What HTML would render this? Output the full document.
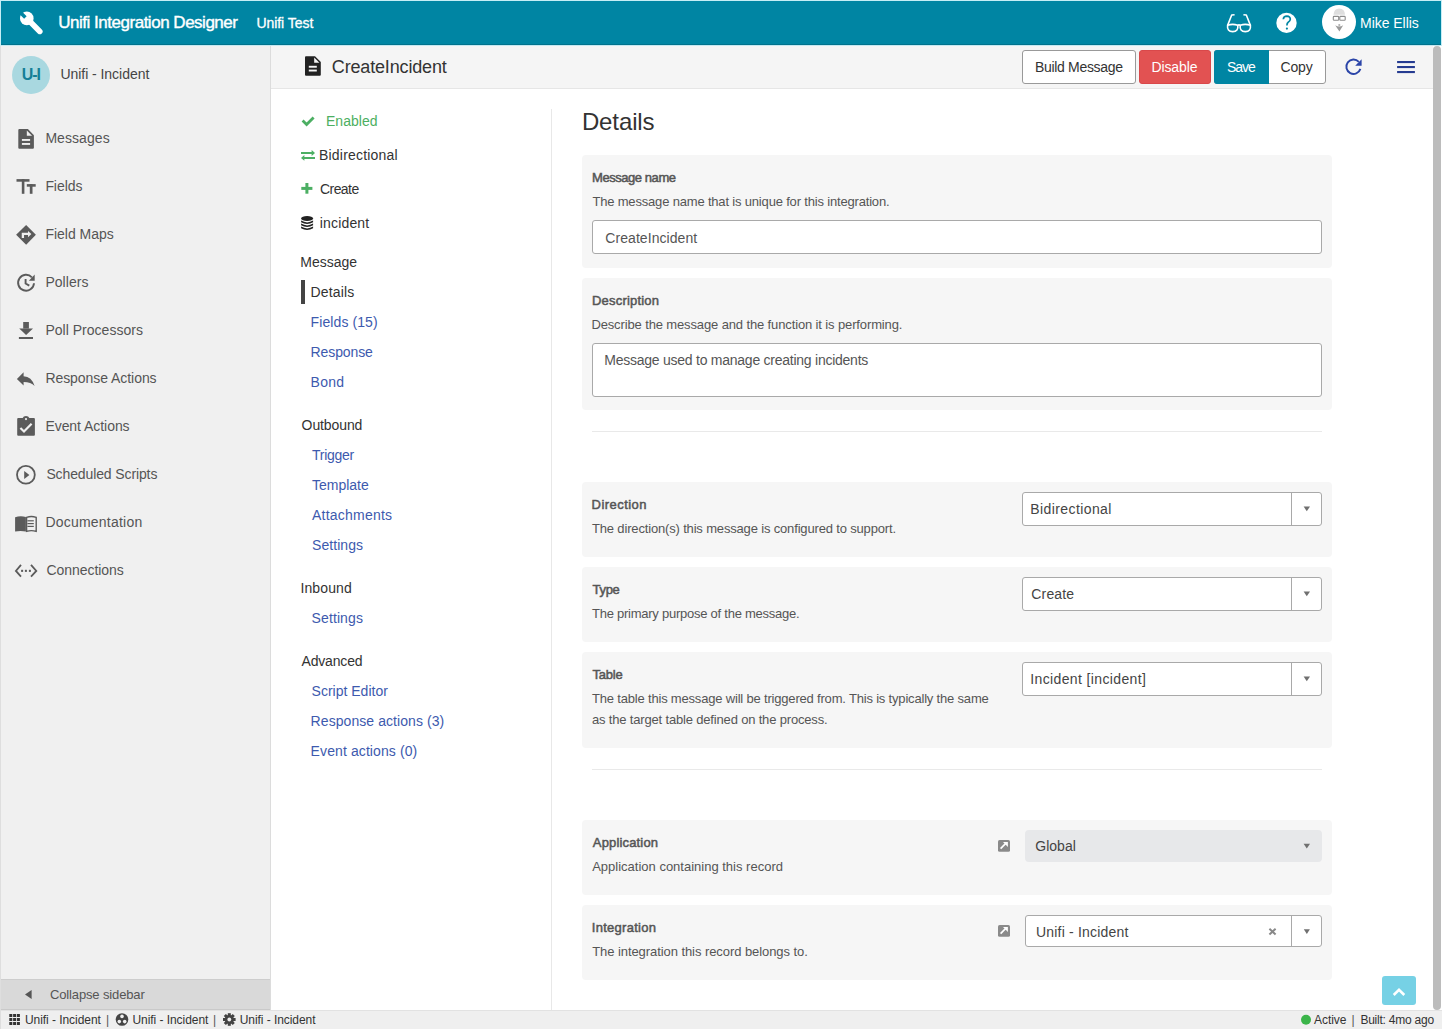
<!DOCTYPE html>
<html><head><meta charset="utf-8">
<style>
*{box-sizing:border-box;margin:0;padding:0}
html,body{width:1442px;height:1029px;overflow:hidden;background:#dedede;font-family:"Liberation Sans",sans-serif}
.a{position:absolute}
.t{position:absolute;white-space:pre;line-height:0;font-family:"Liberation Sans",sans-serif}
svg{position:absolute;overflow:visible}
</style></head><body>
<!-- main frame -->
<div class="a" style="left:1px;top:1px;width:1441px;height:1028px;background:#fff"></div>
<!-- header -->
<div class="a" style="left:0;top:0;width:1442px;height:46px;background:#c6eef6"></div>
<div class="a" style="left:1px;top:1px;width:1440px;height:44px;background:#0085a3;border-bottom:1px solid #00728c"></div>
<!-- sidebar -->
<div class="a" style="left:1px;top:45px;width:269px;height:934px;background:#f0f0f0"></div>
<div class="a" style="left:270px;top:45px;width:1px;height:965px;background:#dcdcdc"></div>
<!-- collapse band -->
<div class="a" style="left:1px;top:979px;width:269px;height:31px;background:#d9d9d9;border-top:1px solid #cdcdcd;border-bottom:1px solid #c9c9c9"></div>
<!-- status bar -->
<div class="a" style="left:1px;top:1010px;width:1441px;height:19px;background:#efefef;border-top:1px solid #e2e2e2"></div>
<!-- toolbar -->
<div class="a" style="left:271px;top:45px;width:1162px;height:44px;background:#f5f5f5;border-bottom:1px solid #e6e6e6"></div>
<div class="a" style="left:1px;top:45px;width:1440px;height:1px;background:#c4e8f1"></div>
<!-- scrollbar -->
<div class="a" style="left:1433px;top:46px;width:8px;height:964px;background:#bcbcbc;border-radius:4px"></div>
<!-- mid divider -->
<div class="a" style="left:551px;top:109px;width:1px;height:901px;background:#e8e8e8"></div>

<!-- cards -->
<div class="a" style="left:582px;top:155px;width:750px;height:113px;background:#f6f6f6;border-radius:4px"></div>
<div class="a" style="left:592px;top:220px;width:730px;height:34px;background:#fff;border:1px solid #a9a9a9;border-radius:3px"></div>
<div class="a" style="left:582px;top:278px;width:750px;height:132px;background:#f6f6f6;border-radius:4px"></div>
<div class="a" style="left:592px;top:343px;width:730px;height:54px;background:#fff;border:1px solid #a9a9a9;border-radius:3px"></div>
<div class="a" style="left:592px;top:431px;width:730px;height:1px;background:#e9e9e9"></div>

<div class="a" style="left:582px;top:482px;width:750px;height:75px;background:#f6f6f6;border-radius:4px"></div>
<div class="a" style="left:582px;top:567px;width:750px;height:75px;background:#f6f6f6;border-radius:4px"></div>
<div class="a" style="left:582px;top:652px;width:750px;height:96px;background:#f6f6f6;border-radius:4px"></div>
<div class="a" style="left:592px;top:769px;width:730px;height:1px;background:#e9e9e9"></div>
<div class="a" style="left:582px;top:820px;width:750px;height:75px;background:#f6f6f6;border-radius:4px"></div>
<div class="a" style="left:582px;top:905px;width:750px;height:75px;background:#f6f6f6;border-radius:4px"></div>

<!-- selects -->
<div class="a" style="left:1022px;top:492px;width:300px;height:34px;background:#fff;border:1px solid #a9a9a9;border-radius:3px"></div>
<div class="a" style="left:1291px;top:493px;width:1px;height:32px;background:#a9a9a9"></div>
<div class="a" style="left:1022px;top:577px;width:300px;height:34px;background:#fff;border:1px solid #a9a9a9;border-radius:3px"></div>
<div class="a" style="left:1291px;top:578px;width:1px;height:32px;background:#a9a9a9"></div>
<div class="a" style="left:1022px;top:662px;width:300px;height:34px;background:#fff;border:1px solid #a9a9a9;border-radius:3px"></div>
<div class="a" style="left:1291px;top:663px;width:1px;height:32px;background:#a9a9a9"></div>
<div class="a" style="left:1025px;top:830px;width:297px;height:32px;background:#e7e8ea;border-radius:4px"></div>
<div class="a" style="left:1025px;top:915px;width:297px;height:32px;background:#fff;border:1px solid #a9a9a9;border-radius:3px"></div>
<div class="a" style="left:1291px;top:916px;width:1px;height:30px;background:#a9a9a9"></div>

<!-- toolbar buttons -->
<div class="a" style="left:1022px;top:50px;width:114px;height:34px;background:#fff;border:1px solid #999;border-radius:3px"></div>
<div class="a" style="left:1139px;top:50px;width:72px;height:34px;background:#e25252;border:1px solid #d9484a;border-radius:3px"></div>
<div class="a" style="left:1214px;top:50px;width:112px;height:34px;background:#fff;border:1px solid #999;border-radius:3px"></div>
<div class="a" style="left:1214px;top:50px;width:55px;height:34px;background:#0085a3;border-radius:3px 0 0 3px"></div>

<!-- mid nav active bar -->
<div class="a" style="left:301px;top:280px;width:4px;height:24px;background:#444"></div>

<!-- sidebar avatar -->
<div class="a" style="left:12px;top:56px;width:38px;height:38px;border-radius:50%;background:#a9d8e0"></div>
<!-- header avatar -->
<div class="a" style="left:1322px;top:5px;width:34px;height:34px;border-radius:50%;background:#fff"></div>
<!-- scroll top button -->
<div class="a" style="left:1382px;top:976px;width:34px;height:29px;border-radius:3px;background:#76d1e5"></div>

<svg width="1442" height="1029" viewBox="0 0 1442 1029" style="left:0;top:0">
<!-- header wrench -->
<g fill="#fff">
  <circle cx="26.8" cy="18.4" r="6.8"/>
  <line x1="27" y1="18.6" x2="39.8" y2="31.4" stroke="#fff" stroke-width="5.6" stroke-linecap="round"/>
</g>
<polygon points="26.6,16.2 21.6,11.2 19.1,13.7 24.1,18.7" fill="#0085a3"/>
<!-- glasses -->
<g fill="none" stroke="#fff" stroke-width="1.6" stroke-linejoin="round">
  <path d="M1227.6 25.2 Q1232.7 23.6 1237.8 25.2 Q1238.6 31.6 1232.7 31.6 Q1226.8 31.6 1227.6 25.2 Z"/>
  <path d="M1240.2 25.2 Q1245.3 23.6 1250.4 25.2 Q1251.2 31.6 1245.3 31.6 Q1239.4 31.6 1240.2 25.2 Z"/>
  <path d="M1237.8 25.2 Q1239 24.6 1240.2 25.2"/>
  <path d="M1227.6 25.4 L1231.7 15 L1234.6 14.7"/>
  <path d="M1250.4 25.4 L1246.3 15 L1243.4 14.7"/>
</g>
<!-- help -->
<circle cx="1286.5" cy="22.9" r="10.2" fill="#fff"/>
<path d="M1283.3 19.2 Q1283.5 16.2 1286.9 16.2 Q1290.4 16.3 1290.3 19.3 Q1290.2 21.2 1288.2 22.3 Q1286.9 23.1 1286.9 25.6" fill="none" stroke="#0085a3" stroke-width="1.7"/>
<circle cx="1286.9" cy="28.6" r="1.1" fill="#0085a3"/>
<!-- header avatar face -->
<path d="M1333.5 14.8 Q1334 8.6 1339.2 8.6 Q1344.6 8.6 1345 14.8 Z" fill="#dedede"/>
<rect x="1333.3" y="16.4" width="5.4" height="3.8" rx="0.8" fill="none" stroke="#8c8c8c" stroke-width="1.1"/>
<rect x="1339.8" y="16.4" width="5.4" height="3.8" rx="0.8" fill="none" stroke="#8c8c8c" stroke-width="1.1"/>
<path d="M1335.2 25.2 Q1339.2 28 1343.2 25.2 L1339.4 31.5 Z" fill="#9a9a9a"/>
<rect x="1338.4" y="24" width="1.8" height="2.2" fill="#b5b5b5"/>

<!-- sidebar avatar initials drawn as text later -->
<!-- sidebar icons -->
<g fill="#5b5b5b">
  <!-- messages file -->
  <path d="M19.3 129.1 H27.9 L33.9 135.2 V147.7 Q33.9 148.7 32.9 148.7 H19.3 Q18.3 148.7 18.3 147.7 V130.1 Q18.3 129.1 19.3 129.1 Z"/>
</g>
<polygon points="26.8,130.6 26.8,135.8 32.1,135.8" fill="#f0f0f0"/>
<rect x="21.9" y="139" width="8.2" height="1.9" fill="#f0f0f0"/>
<rect x="21.9" y="143" width="8.2" height="1.9" fill="#f0f0f0"/>
<g fill="#5b5b5b">
  <!-- fields Tt -->
  <rect x="16.5" y="179.1" width="13" height="2.6"/>
  <rect x="21.8" y="179.1" width="2.6" height="14.7"/>
  <rect x="26.8" y="184.1" width="8.9" height="2.6"/>
  <rect x="29.8" y="184.1" width="2.7" height="9.7"/>
  <!-- field maps diamond -->
  <polygon points="26.15,224.9 35.9,234.8 26.15,244.8 16.1,234.8"/>
</g>
<path d="M22.9 238.1 V233.9 H28.4" fill="none" stroke="#f0f0f0" stroke-width="2.3"/>
<polygon points="28,230.9 31.4,234 28,237.3" fill="#f0f0f0"/>
<g fill="none" stroke="#5b5b5b" stroke-width="1.9">
  <!-- pollers -->
  <path d="M34.0 283.2 A7.95 7.95 0 1 1 31.9 277.3"/>
  <path d="M25.6 279 V283.5 L29.3 285.6"/>
</g>
<polygon points="34.7,274.4 34.7,280.8 28.9,280.8" fill="#5b5b5b"/>
<g fill="#5b5b5b">
  <!-- download -->
  <rect x="23.2" y="322" width="5.7" height="6.6"/>
  <polygon points="19.2,328.4 33,328.4 26.1,334.9"/>
  <rect x="18.9" y="337" width="14.1" height="2"/>
  <!-- reply -->
  <path d="M16.9 378.9 L23.6 372.2 V376.2 Q31.6 376.4 34.6 386 Q31 382 23.6 382 V385.4 Z"/>
  <!-- clipboard -->
  <path d="M18.2 418.1 H22.7 Q23.4 416.1 26 416.1 Q28.6 416.1 29.3 418.1 H33.9 Q34.9 418.1 34.9 419.1 V434.7 Q34.9 435.7 33.9 435.7 H18.2 Q17.2 435.7 17.2 434.7 V419.1 Q17.2 418.1 18.2 418.1 Z"/>
</g>
<circle cx="26" cy="419.1" r="1.1" fill="#f0f0f0"/>
<path d="M20.4 428 L24 431.5 L31.6 423.7" fill="none" stroke="#f0f0f0" stroke-width="2.2"/>
<!-- play circle -->
<circle cx="25.9" cy="474.8" r="8.9" fill="none" stroke="#5b5b5b" stroke-width="1.8"/>
<polygon points="24.2,470.9 24.2,479 29.4,474.9" fill="#5b5b5b"/>
<!-- book -->
<path d="M15.1 517.3 Q20.5 515.5 25.9 517.1 V531.6 Q20.5 530.2 15.1 531.6 Z" fill="#5b5b5b"/>
<path d="M26.6 517.3 Q31.4 515.7 36.2 517.3 V531.3 Q31.4 529.9 26.6 531.3 Z" fill="none" stroke="#5b5b5b" stroke-width="1.4"/>
<g stroke="#5b5b5b" stroke-width="1.2">
  <line x1="27.4" y1="520.8" x2="33.8" y2="520.8"/>
  <line x1="27.4" y1="523.6" x2="33.8" y2="523.6"/>
  <line x1="27.4" y1="526.4" x2="33.8" y2="526.4"/>
</g>
<!-- connections -->
<g fill="none" stroke="#5b5b5b" stroke-width="1.8">
  <path d="M21 564.9 L15.9 570.9 L21 576.6"/>
  <path d="M31 564.9 L36.3 570.9 L31 576.6"/>
</g>
<g fill="#5b5b5b">
  <rect x="21.1" y="569.8" width="2" height="2.1"/>
  <rect x="24.9" y="569.8" width="2" height="2.1"/>
  <rect x="28.9" y="569.8" width="2" height="2.1"/>
</g>
<!-- collapse caret -->
<polygon points="31.6,990 31.6,999 25,994.5" fill="#555"/>

<!-- toolbar file icon -->
<path d="M306 56.3 H315 L320.8 62.1 V74.7 Q320.8 75.7 319.8 75.7 H306 Q305 75.7 305 74.7 V57.3 Q305 56.3 306 56.3 Z" fill="#222"/>
<polygon points="314.2,57.6 314.2,62.8 319.4,62.8" fill="#f5f5f5"/>
<rect x="308.8" y="65.8" width="8" height="1.9" fill="#f5f5f5"/>
<rect x="308.8" y="69.6" width="8" height="1.9" fill="#f5f5f5"/>
<!-- refresh -->
<path d="M1360.4 68.9 A7.2 7.2 0 1 1 1358.8 61.8" fill="none" stroke="#2b45a8" stroke-width="1.9"/>
<polygon points="1361.6,59.3 1361.6,65.7 1355.2,65.7" fill="#2b45a8"/>
<!-- hamburger -->
<g fill="#263c91">
  <rect x="1397.1" y="61" width="17.8" height="2.1"/>
  <rect x="1397.1" y="66" width="17.8" height="2.1"/>
  <rect x="1397.1" y="71" width="17.8" height="2.1"/>
</g>

<!-- mid nav icons -->
<path d="M302.6 120.6 L306.6 124.5 L313.6 117.4" fill="none" stroke="#4caf63" stroke-width="2.8"/>
<g fill="#4caf63">
  <rect x="301" y="152" width="11" height="2"/>
  <polygon points="311.6,150 315,153 311.6,156"/>
  <rect x="304" y="157" width="11" height="2"/>
  <polygon points="304.4,155.1 301,158 304.4,160.8"/>
  <rect x="301.3" y="186.9" width="11.1" height="3"/>
  <rect x="305.4" y="183" width="3" height="10.7"/>
</g>
<g fill="#222">
  <ellipse cx="307.1" cy="218.4" rx="6" ry="2.5"/>
  <path d="M301.1 220.6 Q307.1 224.2 313.1 220.6 V222.2 Q307.1 225.8 301.1 222.2 Z"/>
  <path d="M301.1 223.6 Q307.1 227.2 313.1 223.6 V225.2 Q307.1 228.8 301.1 225.2 Z"/>
  <path d="M301.1 226.6 Q307.1 230.2 313.1 226.6 V228.2 Q307.1 231.8 301.1 228.2 Z"/>
</g>

<!-- select carets -->
<g fill="#707070">
  <polygon points="1303.6,506.5 1310,506.5 1306.8,511.3"/>
  <polygon points="1303.6,591.5 1310,591.5 1306.8,596.3"/>
  <polygon points="1303.6,676.5 1310,676.5 1306.8,681.3"/>
  <polygon points="1303.6,843.8 1310,843.8 1306.8,848.6"/>
  <polygon points="1303.8,929.3 1309.9,929.3 1306.85,934.1"/>
</g>
<!-- clear x -->
<g stroke="#888" stroke-width="2">
  <line x1="1269.4" y1="928.8" x2="1275.6" y2="934.4"/>
  <line x1="1275.6" y1="928.8" x2="1269.4" y2="934.4"/>
</g>
<!-- external link icons -->
<rect x="998" y="840" width="12" height="11.8" rx="1.6" fill="#8a8a8a"/>
<rect x="998" y="925" width="12" height="11.8" rx="1.6" fill="#8a8a8a"/>
<g stroke="#fff" stroke-width="1.7" fill="none"><line x1="1000.6" y1="848.6" x2="1006" y2="843.2"/><line x1="1000.6" y1="933.6" x2="1006" y2="928.2"/></g>
<g fill="#fff"><polygon points="1003,842 1007.9,842 1007.9,846.9"/><polygon points="1003,927 1007.9,927 1007.9,931.9"/></g>

<!-- scroll top chevron -->
<path d="M1393.7 995 L1399 989.8 L1404.3 995" fill="none" stroke="#fff" stroke-width="2.6"/>

<!-- status bar icons -->
<g fill="#333">
  <rect x="9.3" y="1014" width="3" height="3"/><rect x="13.1" y="1014" width="3" height="3"/><rect x="16.9" y="1014" width="3" height="3"/>
  <rect x="9.3" y="1018" width="3" height="3"/><rect x="13.1" y="1018" width="3" height="3"/><rect x="16.9" y="1018" width="3" height="3"/>
  <rect x="9.3" y="1022" width="3" height="3"/><rect x="13.1" y="1022" width="3" height="3"/><rect x="16.9" y="1022" width="3" height="3"/>
</g>
<circle cx="122" cy="1019.5" r="6.3" fill="#444"/>
<g fill="#efefef"><circle cx="122" cy="1016.4" r="1.8"/><circle cx="119.3" cy="1021.6" r="1.8"/><circle cx="124.7" cy="1021.6" r="1.8"/></g>
<g transform="translate(229.3 1019.5)">
  <circle r="4.6" fill="#444"/>
  <g fill="#444">
    <rect x="-1.5" y="-6.3" width="3" height="12.6"/>
    <rect x="-1.5" y="-6.3" width="3" height="12.6" transform="rotate(45)"/>
    <rect x="-1.5" y="-6.3" width="3" height="12.6" transform="rotate(90)"/>
    <rect x="-1.5" y="-6.3" width="3" height="12.6" transform="rotate(135)"/>
  </g>
  <circle r="1.9" fill="#efefef"/>
</g>
<!-- active dot -->
<circle cx="1306" cy="1019.8" r="5" fill="#3bb54a"/>
</svg>


<div class="t" style="left:58.30px;top:22.96px;font-size:17px;color:#fff;letter-spacing:-0.486px;-webkit-text-stroke:0.4px #fff;">Unifi Integration Designer</div>
<div class="t" style="left:256.40px;top:23.00px;font-size:14px;color:#fff;letter-spacing:-0.043px;-webkit-text-stroke:0.3px #fff;">Unifi Test</div>
<div class="t" style="left:1360.00px;top:23.00px;font-size:14px;color:#fff;letter-spacing:-0.035px;">Mike Ellis</div>
<div class="t" style="left:21.80px;top:75.01px;font-size:16px;color:#157f97;font-weight:bold;letter-spacing:-1.141px;">U-I</div>
<div class="t" style="left:60.40px;top:74.00px;font-size:14px;color:#444;letter-spacing:-0.040px;">Unifi - Incident</div>
<div class="t" style="left:45.40px;top:138.00px;font-size:14px;color:#555;letter-spacing:0.070px;">Messages</div>
<div class="t" style="left:45.40px;top:186.00px;font-size:14px;color:#555;letter-spacing:-0.069px;">Fields</div>
<div class="t" style="left:45.40px;top:234.00px;font-size:14px;color:#555;letter-spacing:-0.008px;">Field Maps</div>
<div class="t" style="left:45.40px;top:282.00px;font-size:14px;color:#555;letter-spacing:0.035px;">Pollers</div>
<div class="t" style="left:45.40px;top:330.00px;font-size:14px;color:#555;letter-spacing:0.018px;">Poll Processors</div>
<div class="t" style="left:45.40px;top:378.00px;font-size:14px;color:#555;letter-spacing:-0.056px;">Response Actions</div>
<div class="t" style="left:45.40px;top:426.00px;font-size:14px;color:#555;letter-spacing:-0.050px;">Event Actions</div>
<div class="t" style="left:46.40px;top:474.00px;font-size:14px;color:#555;letter-spacing:-0.115px;">Scheduled Scripts</div>
<div class="t" style="left:45.40px;top:522.00px;font-size:14px;color:#555;letter-spacing:0.218px;">Documentation</div>
<div class="t" style="left:46.40px;top:570.00px;font-size:14px;color:#555;letter-spacing:-0.043px;">Connections</div>
<div class="t" style="left:50.00px;top:995.05px;font-size:13px;color:#555;letter-spacing:-0.140px;">Collapse sidebar</div>
<div class="t" style="left:25.00px;top:1019.99px;font-size:12px;color:#333;letter-spacing:-0.058px;">Unifi - Incident</div>
<div class="t" style="left:106.00px;top:1019.99px;font-size:12px;color:#555;letter-spacing:0.000px;">|</div>
<div class="t" style="left:132.50px;top:1019.99px;font-size:12px;color:#333;letter-spacing:-0.058px;">Unifi - Incident</div>
<div class="t" style="left:213.00px;top:1019.99px;font-size:12px;color:#555;letter-spacing:0.000px;">|</div>
<div class="t" style="left:239.70px;top:1019.99px;font-size:12px;color:#333;letter-spacing:-0.058px;">Unifi - Incident</div>
<div class="t" style="left:1314.00px;top:1019.99px;font-size:12px;color:#333;letter-spacing:-0.061px;">Active</div>
<div class="t" style="left:1351.50px;top:1019.99px;font-size:12px;color:#555;letter-spacing:0.000px;">|</div>
<div class="t" style="left:1360.40px;top:1019.99px;font-size:12px;color:#333;letter-spacing:-0.234px;">Built: 4mo ago</div>
<div class="t" style="left:331.80px;top:67.01px;font-size:18px;color:#333;letter-spacing:-0.159px;">CreateIncident</div>
<div class="t" style="left:1035.00px;top:67.00px;font-size:14px;color:#333;letter-spacing:-0.320px;">Build Message</div>
<div class="t" style="left:1151.40px;top:67.00px;font-size:14px;color:#fff;letter-spacing:-0.101px;">Disable</div>
<div class="t" style="left:1226.90px;top:67.00px;font-size:14px;color:#fff;letter-spacing:-1.041px;">Save</div>
<div class="t" style="left:1280.50px;top:67.00px;font-size:14px;color:#333;letter-spacing:-0.161px;">Copy</div>
<div class="t" style="left:326.00px;top:121.00px;font-size:14px;color:#4caf61;letter-spacing:0.018px;">Enabled</div>
<div class="t" style="left:319.00px;top:155.00px;font-size:14px;color:#333;letter-spacing:0.196px;">Bidirectional</div>
<div class="t" style="left:320.00px;top:189.00px;font-size:14px;color:#333;letter-spacing:-0.567px;">Create</div>
<div class="t" style="left:319.80px;top:223.00px;font-size:14px;color:#333;letter-spacing:0.162px;">incident</div>
<div class="t" style="left:300.30px;top:262.00px;font-size:14px;color:#333;letter-spacing:-0.003px;">Message</div>
<div class="t" style="left:310.60px;top:292.00px;font-size:14px;color:#333;letter-spacing:0.135px;">Details</div>
<div class="t" style="left:310.60px;top:322.00px;font-size:14px;color:#3d5aae;letter-spacing:0.093px;">Fields (15)</div>
<div class="t" style="left:310.60px;top:352.00px;font-size:14px;color:#3d5aae;letter-spacing:-0.108px;">Response</div>
<div class="t" style="left:310.60px;top:382.00px;font-size:14px;color:#3d5aae;letter-spacing:0.230px;">Bond</div>
<div class="t" style="left:301.60px;top:425.00px;font-size:14px;color:#333;letter-spacing:-0.101px;">Outbound</div>
<div class="t" style="left:312.00px;top:455.00px;font-size:14px;color:#3d5aae;letter-spacing:-0.261px;">Trigger</div>
<div class="t" style="left:312.00px;top:485.00px;font-size:14px;color:#3d5aae;letter-spacing:-0.003px;">Template</div>
<div class="t" style="left:312.00px;top:515.00px;font-size:14px;color:#3d5aae;letter-spacing:0.219px;">Attachments</div>
<div class="t" style="left:312.00px;top:545.00px;font-size:14px;color:#3d5aae;letter-spacing:0.059px;">Settings</div>
<div class="t" style="left:300.50px;top:588.00px;font-size:14px;color:#333;letter-spacing:0.097px;">Inbound</div>
<div class="t" style="left:311.60px;top:618.00px;font-size:14px;color:#3d5aae;letter-spacing:0.102px;">Settings</div>
<div class="t" style="left:301.50px;top:661.00px;font-size:14px;color:#333;letter-spacing:-0.169px;">Advanced</div>
<div class="t" style="left:311.60px;top:691.00px;font-size:14px;color:#3d5aae;letter-spacing:0.001px;">Script Editor</div>
<div class="t" style="left:310.60px;top:721.00px;font-size:14px;color:#3d5aae;letter-spacing:0.072px;">Response actions (3)</div>
<div class="t" style="left:310.60px;top:751.00px;font-size:14px;color:#3d5aae;letter-spacing:0.101px;">Event actions (0)</div>
<div class="t" style="left:581.90px;top:122.03px;font-size:24px;color:#333;letter-spacing:-0.110px;">Details</div>
<div class="t" style="left:592.00px;top:178.05px;font-size:13px;color:#555;letter-spacing:-0.441px;-webkit-text-stroke:0.5px #555;">Message name</div>
<div class="t" style="left:592.40px;top:202.05px;font-size:13px;color:#555;letter-spacing:-0.177px;">The message name that is unique for this integration.</div>
<div class="t" style="left:605.30px;top:238.00px;font-size:14px;color:#555;letter-spacing:0.064px;">CreateIncident</div>
<div class="t" style="left:592.00px;top:301.05px;font-size:13px;color:#555;letter-spacing:0.200px;-webkit-text-stroke:0.5px #555;">Description</div>
<div class="t" style="left:591.40px;top:325.05px;font-size:13px;color:#555;letter-spacing:-0.128px;">Describe the message and the function it is performing.</div>
<div class="t" style="left:604.30px;top:360.00px;font-size:14px;color:#555;letter-spacing:-0.249px;">Message used to manage creating incidents</div>
<div class="t" style="left:591.60px;top:505.05px;font-size:13px;color:#555;letter-spacing:0.442px;-webkit-text-stroke:0.5px #555;">Direction</div>
<div class="t" style="left:592.00px;top:529.05px;font-size:13px;color:#555;letter-spacing:-0.164px;">The direction(s) this message is configured to support.</div>
<div class="t" style="left:592.60px;top:590.05px;font-size:13px;color:#555;letter-spacing:-0.318px;-webkit-text-stroke:0.5px #555;">Type</div>
<div class="t" style="left:592.00px;top:614.05px;font-size:13px;color:#555;letter-spacing:-0.248px;">The primary purpose of the message.</div>
<div class="t" style="left:592.60px;top:675.05px;font-size:13px;color:#555;letter-spacing:-0.262px;-webkit-text-stroke:0.5px #555;">Table</div>
<div class="t" style="left:592.00px;top:699.05px;font-size:13px;color:#555;letter-spacing:-0.186px;">The table this message will be triggered from. This is typically the same</div>
<div class="t" style="left:592.00px;top:720.05px;font-size:13px;color:#555;letter-spacing:-0.172px;">as the target table defined on the process.</div>
<div class="t" style="left:592.80px;top:843.05px;font-size:13px;color:#555;letter-spacing:0.163px;-webkit-text-stroke:0.5px #555;">Application</div>
<div class="t" style="left:592.20px;top:867.05px;font-size:13px;color:#555;letter-spacing:-0.001px;">Application containing this record</div>
<div class="t" style="left:591.80px;top:928.05px;font-size:13px;color:#555;letter-spacing:0.280px;-webkit-text-stroke:0.5px #555;">Integration</div>
<div class="t" style="left:592.20px;top:952.05px;font-size:13px;color:#555;letter-spacing:-0.069px;">The integration this record belongs to.</div>
<div class="t" style="left:1030.30px;top:509.00px;font-size:14px;color:#444;letter-spacing:0.404px;">Bidirectional</div>
<div class="t" style="left:1031.30px;top:594.00px;font-size:14px;color:#444;letter-spacing:0.153px;">Create</div>
<div class="t" style="left:1030.30px;top:679.00px;font-size:14px;color:#444;letter-spacing:0.368px;">Incident [incident]</div>
<div class="t" style="left:1035.30px;top:846.00px;font-size:14px;color:#444;letter-spacing:0.008px;">Global</div>
<div class="t" style="left:1036.00px;top:932.00px;font-size:14px;color:#444;letter-spacing:0.194px;">Unifi - Incident</div>
</body></html>
